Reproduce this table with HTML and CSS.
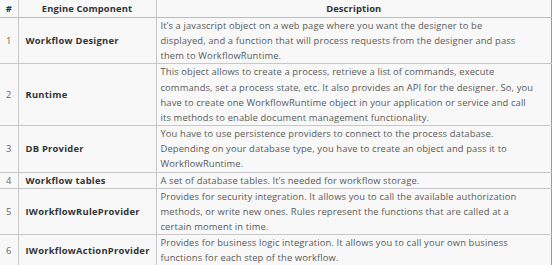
FILE: index.html
```html
<!DOCTYPE html>
<html>
<head>
<meta charset="utf-8">
<link rel="stylesheet" href="styles.css">
</head>
<body>
<table class="grid">
  <colgroup>
    <col class="c-num">
    <col class="c-name">
    <col class="c-desc">
  </colgroup>
  <thead>
    <tr><th class="num">#</th><th>Engine Component</th><th>Description</th></tr>
  </thead>
  <tbody>
    <tr><td class="num">1</td><td class="name">Workflow Designer</td><td class="desc">It’s a javascript object on a web page where you want the designer to be<br>displayed, and a function that will process requests from the designer and pass<br>them to WorkflowRuntime.</td></tr>
    <tr><td class="num">2</td><td class="name">Runtime</td><td class="desc">This object allows to create a process, retrieve a list of commands, execute<br>commands, set a process state, etc. It also provides an API for the designer. So, you<br>have to create one WorkflowRuntime object in your application or service and call<br>its methods to enable document management functionality.</td></tr>
    <tr><td class="num">3</td><td class="name">DB Provider</td><td class="desc">You have to use persistence providers to connect to the process database.<br>Depending on your database type, you have to create an object and pass it to<br>WorkflowRuntime.</td></tr>
    <tr><td class="num">4</td><td class="name">Workflow tables</td><td class="desc">A set of database tables. It’s needed for workflow storage.</td></tr>
    <tr><td class="num">5</td><td class="name">IWorkflowRuleProvider</td><td class="desc">Provides for security integration. It allows you to call the available authorization<br>methods, or write new ones. Rules represent the functions that are called at a<br>certain moment in time.</td></tr>
    <tr><td class="num">6</td><td class="name">IWorkflowActionProvider</td><td class="desc">Provides for business logic integration. It allows you to call your own business<br>functions for each step of the workflow.</td></tr>
  </tbody>
</table>
</body>
</html>
```
FILE: styles.css
```css
html, body {
  margin: 0;
  padding: 0;
  background: #ffffff;
}
.grid {
  border-collapse: collapse;
  width: 552px;
  table-layout: fixed;
  background: #f8f8f8;
  font-family: "Open Sans", sans-serif;
  font-size: 9.4px;
  letter-spacing: 0.12px;
  line-height: 15.15px;
  color: #5a5a5a;
}
.c-num { width: 18px; }
.c-name { width: 138px; }
.grid th, .grid td {
  border: 1px solid #c8c8c8;
  padding: 0 4px;
  vertical-align: middle;
}
.grid th {
  font-weight: 700;
  color: #333333;
  text-align: center;
  height: 17px;
  border-top: none;
  border-bottom-color: #bdbdbd;
}
.grid th.num { text-align: center; padding: 0; }
.grid tr > :first-child { border-left: none; }
.grid tr > :last-child { border-right: 1px solid #9a9a9a; }
.grid td.num { text-align: center; padding: 0; color: #666666; }
.grid td.name { font-weight: 700; color: #333333; padding-left: 7px; letter-spacing: 0.25px; }
.grid td.desc { padding: 0 4px; }
```
